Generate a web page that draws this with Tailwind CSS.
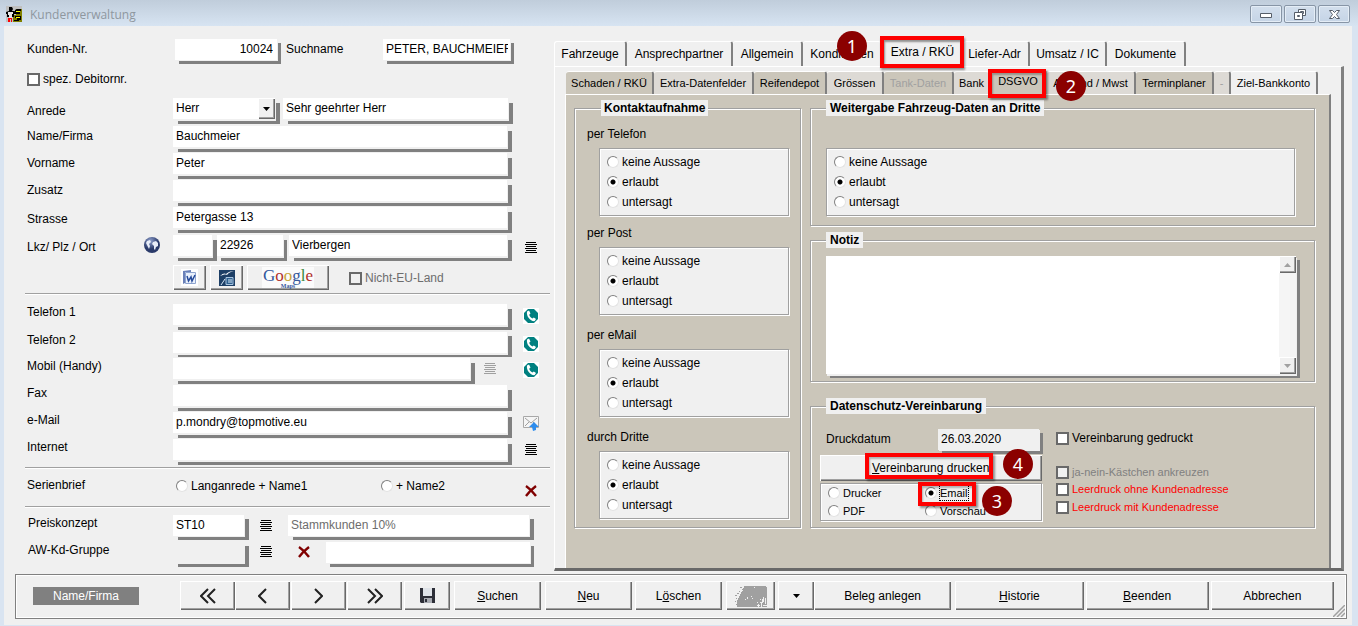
<!DOCTYPE html>
<html lang="de">
<head>
<meta charset="utf-8">
<title>Kundenverwaltung</title>
<script src="https://cdn.jsdelivr.net/npm/@tailwindcss/browser@4"></script>
</head>
<body class="min-h-screen bg-[#f0f0f0] text-black text-[12px] leading-4 font-['Liberation_Sans',Arial,sans-serif]">

<svg class="hidden" aria-hidden="true">
  <symbol id="lines" viewBox="0 0 12 12"><path d="M1 .5h10M0 2.5h12M1 4.5h10M0 6.5h12M1 8.5h10M0 10.5h12" stroke="currentColor" stroke-width="1" shape-rendering="crispEdges"/></symbol>
  <symbol id="cross" viewBox="0 0 12 12"><path d="M1 1c3 2 7 6 10 10M11 1C7 4 4 7 1 11" stroke="#800000" stroke-width="2.400" fill="none"/></symbol>
  <symbol id="phone" viewBox="0 0 16 16"><path fill="#fff" d="M0 0h16v16H0z"/><path fill="#008080" d="M5 1h6l4 4v6l-4 4H5l-4-4V5z"/><path fill="#fff" d="M4 3.500l2-1 1.500 3-1.300 1.200c.5 1.800 1.600 3 3.200 3.800l1.400-1.100 2.200 1.700-1.300 2c-4 .6-8.600-4.600-7.700-9.600z"/></symbol>
</svg>

<div class="min-h-screen flex flex-col border-l-4 border-r-[6px] border-b border-[#d9e4f1]">
  <header class="-ml-1 -mr-[6px] h-[26px] flex items-center pl-[6px] pr-2 gap-2 bg-linear-to-b from-[#c0cddb] to-[#d7e4f2]">
    <svg class="size-4 mt-[2px]" viewBox="0 0 16 16" aria-hidden="true"><path fill="#c0c0c0" d="M0 0h16v16H0z"/><path fill="#808000" d="M10 3h6v13H7V9h3z"/><path d="M3 1h3l1 2-1 2h2l3 1v2H8v3H1V8H0V6l3-1z"/><path d="M2 6h5v2H6v4H3V9H2z" fill="#e8e8e8"/><path d="M2 12h4v4H5v-3H4v3H2z" fill="#f00"/><path d="M9 4l2-1h4v2h-1v3h-3L9 7zM9 10h6v4h-2v1H8v-1h3v-2H9z"/><path d="M10 5h4v1h-4zM10 11h4v1h-4z" fill="#ff0"/></svg>
    <h1 class="flex-1 pt-1 text-[#8e979f] font-['Open_Sans','Noto_Sans',sans-serif]">Kundenverwaltung</h1>
    <div class="flex gap-[2px] pt-[2px]">
      <button aria-label="Minimieren" class="w-8 h-[18px] flex items-center justify-center rounded-[2px] border border-[#8795a6] bg-linear-to-b from-[#d3dfed] to-[#c5d4e6] shadow-[inset_0_0_0_1px_#e4edf6]"><svg class="w-3 h-[5px] mt-[2px]" viewBox="0 0 12 5"><path d="M.5.5h11v4H.5z" fill="#fff" stroke="#555d68"/></svg></button>
      <button aria-label="Wiederherstellen" class="w-8 h-[18px] flex items-center justify-center rounded-[2px] border border-[#8795a6] bg-linear-to-b from-[#d3dfed] to-[#c5d4e6] shadow-[inset_0_0_0_1px_#e4edf6]"><svg class="w-3 h-[11px]" viewBox="0 0 12 11" fill="#fff" stroke="#555d68"><path d="M4.500.5h7v6h-7z"/><path d="M6.500 2.500h3v2h-3z"/><path d="M.5 3.500h8v7h-8z"/><path d="M3.500 6.500h2v1h-2z"/></svg></button>
      <button aria-label="Schließen" class="w-8 h-[18px] flex items-center justify-center rounded-[2px] border border-[#8795a6] bg-linear-to-b from-[#d3dfed] to-[#c5d4e6] shadow-[inset_0_0_0_1px_#e4edf6]"><svg class="w-[11px] h-[9px]" viewBox="0 0 11 9"><path d="M.5.5h3l2 2 2-2h3L7.500 4.500l3 4h-3l-2-2-2 2h-3l3-4z" fill="#fff" stroke="#555d68"/></svg></button>
    </div>
  </header>

  <main class="flex">
    <form class="w-[550px] shrink-0 pt-[13px] pb-[2px] pl-[21px]">
      <div class="h-8 flex items-start pl-[2px]">
        <label for="nr" class="w-[148px] pt-[2px]">Kunden-Nr.</label>
        <input id="nr" value="10024" class="w-[102px] h-[21px] bg-white pr-1 pb-[1px] text-right shadow-[1px_1px_0_#f0f0f0,4px_4px_0_#808080]">
        <label for="such" class="w-[97px] ml-[9px] pt-[2px]">Suchname</label>
        <input id="such" value="PETER, BAUCHMEIER" class="w-[127px] h-[21px] bg-white pl-[3px] pr-[2px] pb-[1px] shadow-[1px_1px_0_#f0f0f0,4px_4px_0_#808080]">
      </div>
      <div class="h-[27px] flex items-start pl-[2px]">
        <label class="flex items-center gap-[3px]"><input type="checkbox" class="appearance-none size-[13px] border-2 border-[#696969] bg-white">spez. Debitornr.</label>
      </div>
      <div class="h-7 flex items-start pl-[2px]">
        <label for="anrede" class="w-[146px] pt-[5px]">Anrede</label>
        <div class="relative w-[102px] h-[21px] bg-white shadow-[1px_2px_0_#f0f0f0,5px_5px_0_#808080]">
          <select id="anrede" class="appearance-none w-full h-full pl-[3px] pb-[1px]"><option>Herr</option></select>
          <span class="absolute right-0 top-0 w-[17px] h-[21px] flex items-center justify-center bg-[#f0f0f0] shadow-[inset_1px_1px_0_#fff,inset_-1px_-1px_0_#696969,inset_-2px_-2px_0_#a0a0a0] pointer-events-none"><svg class="w-[7px] h-1" viewBox="0 0 7 4"><path d="M0 0h7L3.500 4z"/></svg></span>
        </div>
        <input aria-label="Briefanrede" value="Sehr geehrter Herr" class="w-[225px] h-[21px] ml-2 bg-white pl-[3px] pb-[1px] shadow-[1px_2px_0_#f0f0f0,5px_5px_0_#808080]">
      </div>
      <div class="h-[27px] flex items-start pl-[2px]">
        <label for="name" class="w-[146px] pt-[2px]">Name/Firma</label>
        <input id="name" value="Bauchmeier" class="w-[334px] h-[21px] bg-white pl-[3px] pb-[1px] shadow-[1px_2px_0_#f0f0f0,5px_5px_0_#808080]">
      </div>
      <div class="h-[27px] flex items-start pl-[2px]">
        <label for="vor" class="w-[146px] pt-[2px]">Vorname</label>
        <input id="vor" value="Peter" class="w-[334px] h-[21px] bg-white pl-[3px] pb-[1px] shadow-[1px_2px_0_#f0f0f0,5px_5px_0_#808080]">
      </div>
      <div class="h-[27px] flex items-start pl-[2px]">
        <label for="zus" class="w-[146px] pt-[2px]">Zusatz</label>
        <input id="zus" class="w-[334px] h-[21px] bg-white pl-[3px] pb-[1px] shadow-[1px_2px_0_#f0f0f0,5px_5px_0_#808080]">
      </div>
      <div class="h-7 flex items-start pl-[2px]">
        <label for="str" class="w-[146px] pt-1">Strasse</label>
        <input id="str" value="Petergasse 13" class="w-[334px] h-[21px] bg-white pl-[3px] pb-[1px] shadow-[1px_2px_0_#f0f0f0,5px_5px_0_#808080]">
      </div>
      <div class="h-[30px] flex items-start pl-[2px]">
        <label for="ort" class="w-[117px] pt-1">Lkz/ Plz / Ort</label>
        <svg class="size-4 mt-[2px] mr-[13px]" viewBox="0 0 16 16" aria-hidden="true"><defs><radialGradient id="g" cx=".4" cy=".25"><stop offset="0" stop-color="#8fa0cc"/><stop offset="1" stop-color="#2a3a6a"/></radialGradient></defs><circle cx="8" cy="8" r="8" fill="url(#g)"/><path d="M3 4l3-1 1 2-2 2 1 2-1 3-2-4-1-2zM9 5l3-1 2 2v3l-2 1-1 3-1-1V9L8 7z" fill="#e8edf8"/></svg>
        <input aria-label="Lkz" class="w-[39px] h-[21px] bg-white shadow-[1px_2px_0_#f0f0f0,5px_5px_0_#808080]">
        <input aria-label="Plz" value="22926" class="relative w-[66px] h-[21px] ml-[5px] bg-white pl-[3px] pb-[1px] shadow-[1px_2px_0_#f0f0f0,4px_5px_0_#808080]">
        <input id="ort" value="Vierbergen" class="w-[218px] h-[21px] ml-[6px] bg-white pl-[3px] pb-[1px] shadow-[1px_2px_0_#f0f0f0,5px_5px_0_#808080]">
        <button type="button" aria-label="Ort wählen" class="ml-[18px] mt-[7px]"><svg class="size-3"><use href="#lines"/></svg></button>
      </div>
      <div class="h-7 flex items-start pl-[148px]">
        <button type="button" aria-label="Word" class="w-[33px] h-[25px] flex items-center justify-center bg-[#f0f0f0] shadow-[inset_1px_1px_0_#fff,inset_-1px_-1px_0_#696969,inset_-2px_-2px_0_#a0a0a0]"><svg class="size-[17px]" viewBox="0 0 17 17"><path d="M0 0h17v17H0z" fill="#fff"/><path d="M2 2l8-1v2H4v11l-2 1z" fill="#6a80b8"/><path d="M4.500 3.500h10v11h-10z" fill="#e9f0fb" stroke="#8ea4cf"/><path d="M6 7l1.500 5L10 8l1 4 3-6" fill="none" stroke="#254a9a" stroke-width="1.500"/></svg></button>
        <button type="button" aria-label="Writer" class="w-[33px] h-[25px] ml-1 flex items-center justify-center bg-[#f0f0f0] shadow-[inset_1px_1px_0_#fff,inset_-1px_-1px_0_#696969,inset_-2px_-2px_0_#a0a0a0]"><svg class="size-4" viewBox="0 0 16 16"><path d="M0 0h16v16H0z" fill="#1d3f66"/><path d="M1 6c3-3 5-3 6-2 2-2 5-3 8-3-4 1-6 2-7 4-2-1-4 0-7 1z" fill="#fff"/><path d="M7 7.500h7v7H7z" fill="#2f618f" stroke="#a8c4e0"/><path d="M9 10h4M9 12h4M2 15l4-6" stroke="#d6e6f5" fill="none"/></svg></button>
        <button type="button" aria-label="Google Maps" class="w-[82px] h-[25px] ml-1 flex items-center justify-center bg-[#f0f0f0] shadow-[inset_1px_1px_0_#fff,inset_-1px_-1px_0_#696969,inset_-2px_-2px_0_#a0a0a0]">
          <span class="h-[21px] w-[52px] bg-[#fbfbfb] flex flex-col items-center font-['Liberation_Serif',serif]"><span class="text-[17px] leading-[17px]"><span class="text-[#35589c]">G</span><span class="text-[#b0302c]">o</span><span class="text-[#c8a63a]">o</span><span class="text-[#35589c]">g</span><span class="text-[#3c8a40]">l</span><span class="text-[#b0302c]">e</span></span><span class="text-[6px] leading-[4px] font-bold text-[#35589c]">Maps</span></span>
        </button>
        <label class="flex items-center gap-[3px] ml-5 pt-[5px] text-[#6d6d6d]"><input type="checkbox" disabled class="appearance-none size-[13px] border-2 border-[#696969]">Nicht-EU-Land</label>
      </div>
      <hr class="mr-1 border-t border-b border-t-[#a0a0a0] border-b-white">
      <div class="h-7 mt-[9px] flex items-start pl-[2px]">
        <label for="t1" class="w-[146px]">Telefon 1</label>
        <input id="t1" class="w-[334px] h-[21px] bg-white pl-[3px] pb-[1px] shadow-[1px_2px_0_#f0f0f0,5px_5px_0_#808080]">
        <button type="button" aria-label="Telefon 1 anrufen" class="ml-4 mt-1"><svg class="size-4"><use href="#phone"/></svg></button>
      </div>
      <div class="h-[26px] flex items-start pl-[2px]">
        <label for="t2" class="w-[146px]">Telefon 2</label>
        <input id="t2" class="w-[334px] h-[21px] bg-white pl-[3px] pb-[1px] shadow-[1px_2px_0_#f0f0f0,5px_4px_0_#808080]">
        <button type="button" aria-label="Telefon 2 anrufen" class="ml-4 mt-1"><svg class="size-4"><use href="#phone"/></svg></button>
      </div>
      <div class="h-[27px] flex items-start pl-[2px]">
        <label for="mob" class="w-[146px]">Mobil (Handy)</label>
        <input id="mob" class="w-[297px] h-[21px] bg-white pl-[3px] pb-[1px] shadow-[1px_2px_0_#f0f0f0,5px_5px_0_#808080]">
        <button type="button" aria-label="Mobil wählen" class="ml-[14px] mt-[5px] text-[#a0a0a0]"><svg class="size-3"><use href="#lines"/></svg></button>
        <button type="button" aria-label="Mobil anrufen" class="ml-[27px] mt-1"><svg class="size-4"><use href="#phone"/></svg></button>
      </div>
      <div class="h-[27px] flex items-start pl-[2px]">
        <label for="fax" class="w-[146px]">Fax</label>
        <input id="fax" class="w-[334px] h-[21px] bg-white pl-[3px] pb-[1px] shadow-[1px_2px_0_#f0f0f0,5px_5px_0_#808080]">
      </div>
      <div class="h-[27px] flex items-start pl-[2px]">
        <label for="mail" class="w-[146px]">e-Mail</label>
        <input id="mail" value="p.mondry@topmotive.eu" class="w-[334px] h-[21px] bg-white pl-[3px] pb-[1px] shadow-[1px_2px_0_#f0f0f0,5px_5px_0_#808080]">
        <button type="button" aria-label="e-Mail senden" class="ml-4 mt-1"><svg class="size-4" viewBox="0 0 16 16"><path d="M.5.5h15v11H.5z" fill="#f5f5f5" stroke="#a8a8a8"/><path d="M2 2l6 5 6-5M2 10l4-4M14 10l-4-4" fill="none" stroke="#a0a0a0"/><path d="M11 6l5 5h-3v3l-3 1-1-4H6z" fill="#2e8ded"/></svg></button>
      </div>
      <div class="h-7 flex items-start pl-[2px]">
        <label for="web" class="w-[146px]">Internet</label>
        <input id="web" class="w-[334px] h-[21px] bg-white pl-[3px] pb-[1px] shadow-[1px_2px_0_#f0f0f0,5px_5px_0_#808080]">
        <button type="button" aria-label="Internet öffnen" class="ml-[18px] mt-[5px]"><svg class="size-3"><use href="#lines"/></svg></button>
      </div>
      <hr class="mr-1 border-t border-b border-t-[#a0a0a0] border-b-white">
      <div class="h-[37px] pt-2 flex items-start pl-[2px]">
        <span class="w-[149px]">Serienbrief</span>
        <label class="w-[205px] flex items-center gap-[3px] pt-[1px]"><input type="radio" name="serie" class="appearance-none size-3 rounded-full bg-white border border-[#808080] border-r-[#e3e3e3] border-b-[#e3e3e3]">Langanrede + Name1</label>
        <label class="w-[144px] flex items-center gap-[3px] pt-[1px]"><input type="radio" name="serie" class="appearance-none size-3 rounded-full bg-white border border-[#808080] border-r-[#e3e3e3] border-b-[#e3e3e3]">+ Name2</label>
        <button type="button" aria-label="Serienbrief löschen" class="mt-2"><svg class="size-3"><use href="#cross"/></svg></button>
      </div>
      <hr class="mr-1 border-t border-b border-t-[#a0a0a0] border-b-white">
      <div class="h-[27px] mt-[7px] flex items-start pl-[3px]">
        <label for="preis" class="w-[145px]">Preiskonzept</label>
        <input id="preis" value="ST10" class="w-[71px] h-[21px] bg-white pl-[3px] pb-[2px] shadow-[1px_1px_0_#f0f0f0,5px_4px_0_#808080]">
        <button type="button" aria-label="Preiskonzept wählen" class="ml-4 mt-[5px]"><svg class="size-3"><use href="#lines"/></svg></button>
        <input aria-label="Preiskonzept Name" value="Stammkunden 10%" class="w-[241px] h-[21px] ml-4 bg-white pl-[3px] pb-[2px] text-[#6d6d6d] shadow-[1px_1px_0_#f0f0f0,5px_4px_0_#808080]">
      </div>
      <div class="h-[27px] flex items-start pl-[3px]">
        <label for="aw" class="w-[145px]">AW-Kd-Gruppe</label>
        <input id="aw" class="w-[71px] h-[21px] bg-[#f0f0f0] pl-[3px] shadow-[1px_1px_0_#f0f0f0,5px_4px_0_#808080]">
        <button type="button" aria-label="Gruppe wählen" class="ml-4 mt-1"><svg class="size-3"><use href="#lines"/></svg></button>
        <button type="button" aria-label="Gruppe löschen" class="ml-[26px] mt-1"><svg class="size-3"><use href="#cross"/></svg></button>
        <input aria-label="Gruppe Name" class="w-[204px] h-[21px] ml-4 bg-white pl-[3px] shadow-[1px_1px_0_#f0f0f0,4px_4px_0_#808080]">
      </div>
    </form>

    <section class="flex-1 flex flex-col pt-[15px] pr-2">
      <div class="h-[25px] flex" role="tablist">
        <button role="tab" class="w-[73px] rounded-t-[3px] border-t border-t-white border-l border-l-white border-r-2 border-r-[#808080]">Fahrzeuge</button>
        <button role="tab" class="w-[106px] rounded-t-[3px] border-t border-t-white border-r-2 border-r-[#808080]">Ansprechpartner</button>
        <button role="tab" class="w-[70px] rounded-t-[3px] border-t border-t-white border-r-2 border-r-[#808080]">Allgemein</button>
        <button role="tab" class="w-[78px] rounded-t-[3px] border-t border-t-white">Konditionen</button>
        <div class="relative w-[83px]">
          <button role="tab" aria-selected="true" class="w-full h-full pb-[3px]">Extra / RKÜ</button>
          <span class="absolute z-10 -left-px -top-[5px] w-[84px] h-8 border-4 border-[#fe0000] shadow-[1px_2px_2px_#00000066,inset_1px_2px_2px_#00000066] pointer-events-none"></span>
          <span class="absolute z-10 -left-11 -top-[10px] size-[30px] rounded-full bg-[#8b0000] text-white text-[18px] font-['Noto_Sans',sans-serif] flex items-center justify-center">1</span>
        </div>
        <button role="tab" class="w-[66px] rounded-t-[3px] pr-[3px] border-t border-t-white border-r-2 border-r-[#808080]">Liefer-Adr</button>
        <button role="tab" class="w-[77px] rounded-t-[3px] border-t border-t-white border-r-2 border-r-[#808080]">Umsatz / IC</button>
        <button role="tab" class="w-[79px] rounded-t-[3px] border-t border-t-white border-r-2 border-r-[#808080]">Dokumente</button>
      </div>
      <div class="flex-1 flex flex-col pt-1 pl-[10px] pr-[10px] border-l border-t border-l-white border-t-white border-r-[3px] border-r-[#808080] border-b-[3px] border-b-[#696969]">
        <div class="h-[23px] flex pl-[1px] text-[11px]" role="tablist">
          <button role="tab" class="w-[88px] rounded-t-[3px] bg-[#cbc6ba] border-t border-t-white border-r-2 border-r-[#808080]">Schaden / RKÜ</button>
          <button role="tab" class="w-[100px] rounded-t-[3px] bg-[#dddad5] border-t border-t-white border-r-2 border-r-[#808080]">Extra-Datenfelder</button>
          <button role="tab" class="w-[73px] rounded-t-[3px] bg-[#cbc6ba] border-t border-t-white border-r-2 border-r-[#808080]">Reifendepot</button>
          <button role="tab" class="w-[57px] rounded-t-[3px] bg-[#dddad5] border-t border-t-white border-r-2 border-r-[#808080]">Grössen</button>
          <button role="tab" disabled class="w-[70px] rounded-t-[3px] bg-[#cbc6ba] text-[#a0a0a0] border-t border-t-white border-r-2 border-r-[#808080]">Tank-Daten</button>
          <button role="tab" class="w-[35px] rounded-t-[3px] bg-[#dddad5] border-t border-t-white">Bank</button>
          <div class="relative w-[58px] bg-[#cbc6ba]">
            <button role="tab" aria-selected="true" class="w-full h-full pb-[4px]">DSGVO</button>
            <span class="absolute z-10 -left-px -top-[2px] w-[58px] h-[29px] border-4 border-[#fe0000] shadow-[2px_2px_2px_#00000066,inset_1px_2px_2px_#00000044] pointer-events-none"></span>
            <span class="absolute z-10 left-[67px] top-0 size-[30px] rounded-full bg-[#8b0000] text-white text-[18px] font-['Noto_Sans',sans-serif] flex items-center justify-center">2</span>
          </div>
          <button role="tab" class="w-[89px] rounded-t-[3px] bg-[#dddad5] border-t border-t-white border-r-2 border-r-[#808080]">Ausland / Mwst</button>
          <button role="tab" class="w-[78px] rounded-t-[3px] bg-[#cbc6ba] border-t border-t-white border-r-2 border-r-[#808080]">Terminplaner</button>
          <button role="tab" disabled class="w-[17px] rounded-t-[3px] bg-[#dddad5] text-[#a0a0a0] border-t border-t-white border-r-2 border-r-[#808080]">-</button>
          <button role="tab" class="w-[87px] rounded-t-[3px] border-t border-t-white border-r-2 border-r-[#808080]">Ziel-Bankkonto</button>
        </div>
        <div class="flex-1 flex items-start gap-[9px] pt-[5px] pl-2 pr-[14px] bg-[#cbc6ba] border-l border-t border-l-white border-t-white border-r-2 border-r-[#808080]">
          <fieldset class="w-[227px] pl-3 pr-[11px] pb-2 border border-[#a0a0a0] shadow-[1px_1px_0_#fff,inset_1px_1px_0_#fff]">
            <legend class="ml-[14px] px-[3px] bg-[#f0f0f0] font-bold">Kontaktaufnahme</legend>
            <div class="mt-[10px] mb-[6px]">per Telefon</div>
            <div class="ml-3 h-[68px] pt-[5px] pl-[7px] flex flex-col gap-1 bg-[#f0f0f0] border border-[#a0a0a0] shadow-[1px_1px_0_#fff,inset_1px_1px_0_#fff]">
              <label class="flex items-center gap-[3px]"><input type="radio" name="a" class="appearance-none size-3 rounded-full bg-white border border-[#808080] border-r-[#e3e3e3] border-b-[#e3e3e3]">keine Aussage</label>
              <label class="flex items-center gap-[3px]"><input type="radio" name="a" checked class="appearance-none size-3 rounded-full bg-white border border-[#808080] border-r-[#e3e3e3] border-b-[#e3e3e3] checked:bg-[radial-gradient(circle,#000_2px,transparent_3px)]">erlaubt</label>
              <label class="flex items-center gap-[3px]"><input type="radio" name="a" class="appearance-none size-3 rounded-full bg-white border border-[#808080] border-r-[#e3e3e3] border-b-[#e3e3e3]">untersagt</label>
            </div>
            <div class="mt-[9px] mb-[6px]">per Post</div>
            <div class="ml-3 h-[68px] pt-[5px] pl-[7px] flex flex-col gap-1 bg-[#f0f0f0] border border-[#a0a0a0] shadow-[1px_1px_0_#fff,inset_1px_1px_0_#fff]">
              <label class="flex items-center gap-[3px]"><input type="radio" name="b" class="appearance-none size-3 rounded-full bg-white border border-[#808080] border-r-[#e3e3e3] border-b-[#e3e3e3]">keine Aussage</label>
              <label class="flex items-center gap-[3px]"><input type="radio" name="b" checked class="appearance-none size-3 rounded-full bg-white border border-[#808080] border-r-[#e3e3e3] border-b-[#e3e3e3] checked:bg-[radial-gradient(circle,#000_2px,transparent_3px)]">erlaubt</label>
              <label class="flex items-center gap-[3px]"><input type="radio" name="b" class="appearance-none size-3 rounded-full bg-white border border-[#808080] border-r-[#e3e3e3] border-b-[#e3e3e3]">untersagt</label>
            </div>
            <div class="mt-3 mb-[6px]">per eMail</div>
            <div class="ml-3 h-[68px] pt-[5px] pl-[7px] flex flex-col gap-1 bg-[#f0f0f0] border border-[#a0a0a0] shadow-[1px_1px_0_#fff,inset_1px_1px_0_#fff]">
              <label class="flex items-center gap-[3px]"><input type="radio" name="c" class="appearance-none size-3 rounded-full bg-white border border-[#808080] border-r-[#e3e3e3] border-b-[#e3e3e3]">keine Aussage</label>
              <label class="flex items-center gap-[3px]"><input type="radio" name="c" checked class="appearance-none size-3 rounded-full bg-white border border-[#808080] border-r-[#e3e3e3] border-b-[#e3e3e3] checked:bg-[radial-gradient(circle,#000_2px,transparent_3px)]">erlaubt</label>
              <label class="flex items-center gap-[3px]"><input type="radio" name="c" class="appearance-none size-3 rounded-full bg-white border border-[#808080] border-r-[#e3e3e3] border-b-[#e3e3e3]">untersagt</label>
            </div>
            <div class="mt-3 mb-[6px]">durch Dritte</div>
            <div class="ml-3 h-[68px] pt-[5px] pl-[7px] flex flex-col gap-1 bg-[#f0f0f0] border border-[#a0a0a0] shadow-[1px_1px_0_#fff,inset_1px_1px_0_#fff]">
              <label class="flex items-center gap-[3px]"><input type="radio" name="d" class="appearance-none size-3 rounded-full bg-white border border-[#808080] border-r-[#e3e3e3] border-b-[#e3e3e3]">keine Aussage</label>
              <label class="flex items-center gap-[3px]"><input type="radio" name="d" checked class="appearance-none size-3 rounded-full bg-white border border-[#808080] border-r-[#e3e3e3] border-b-[#e3e3e3] checked:bg-[radial-gradient(circle,#000_2px,transparent_3px)]">erlaubt</label>
              <label class="flex items-center gap-[3px]"><input type="radio" name="d" class="appearance-none size-3 rounded-full bg-white border border-[#808080] border-r-[#e3e3e3] border-b-[#e3e3e3]">untersagt</label>
            </div>
          </fieldset>

          <div class="flex-1">
            <fieldset class="pl-[15px] pr-[19px] pb-[9px] border border-[#a0a0a0] shadow-[1px_1px_0_#fff,inset_1px_1px_0_#fff]">
              <legend class="px-1 bg-[#f0f0f0] font-bold">Weitergabe Fahrzeug-Daten an Dritte</legend>
              <div class="mt-8 h-[68px] pt-[5px] pl-[7px] flex flex-col gap-1 bg-[#f0f0f0] border border-[#a0a0a0] shadow-[1px_1px_0_#fff,inset_1px_1px_0_#fff]">
                <label class="flex items-center gap-[3px]"><input type="radio" name="e" class="appearance-none size-3 rounded-full bg-white border border-[#808080] border-r-[#e3e3e3] border-b-[#e3e3e3]">keine Aussage</label>
                <label class="flex items-center gap-[3px]"><input type="radio" name="e" checked class="appearance-none size-3 rounded-full bg-white border border-[#808080] border-r-[#e3e3e3] border-b-[#e3e3e3] checked:bg-[radial-gradient(circle,#000_2px,transparent_3px)]">erlaubt</label>
                <label class="flex items-center gap-[3px]"><input type="radio" name="e" class="appearance-none size-3 rounded-full bg-white border border-[#808080] border-r-[#e3e3e3] border-b-[#e3e3e3]">untersagt</label>
              </div>
            </fieldset>
            <fieldset class="mt-[6px] pl-[15px] pr-[18px] pb-[7px] border border-[#a0a0a0] shadow-[1px_1px_0_#fff,inset_1px_1px_0_#fff]">
              <legend class="px-1 bg-[#f0f0f0] font-bold">Notiz</legend>
              <div class="mt-2 h-[118px] flex bg-white shadow-[1px_2px_0_#f0f0f0,4px_4px_0_#808080]">
                <textarea aria-label="Notiz" class="flex-1 resize-none outline-none p-1"></textarea>
                <div class="w-[17px] flex flex-col justify-between bg-[#f5f5f5]">
                  <button type="button" aria-label="Nach oben" class="h-[17px] flex items-center justify-center bg-[#f0f0f0] shadow-[inset_1px_1px_0_#fff,inset_-1px_-1px_0_#696969,inset_-2px_-2px_0_#a0a0a0]"><svg class="w-[7px] h-1" viewBox="0 0 7 4"><path d="M0 4h7L3.500 0z" fill="#a0a0a0"/></svg></button>
                  <button type="button" aria-label="Nach unten" class="h-[17px] flex items-center justify-center bg-[#f0f0f0] shadow-[inset_1px_1px_0_#fff,inset_-1px_-1px_0_#696969,inset_-2px_-2px_0_#a0a0a0]"><svg class="w-[7px] h-1" viewBox="0 0 7 4"><path d="M0 0h7L3.500 4z" fill="#a0a0a0"/></svg></button>
                </div>
              </div>
            </fieldset>
            <fieldset class="mt-4 pl-[9px] pb-[6px] border border-[#a0a0a0] shadow-[1px_1px_0_#fff,inset_1px_1px_0_#fff]">
              <legend class="ml-[6px] px-1 bg-[#f0f0f0] font-bold">Datenschutz-Vereinbarung</legend>
              <div class="mt-[15px] flex items-start">
                <div class="w-[222px]">
                  <div class="flex pl-[6px]">
                    <label for="dd" class="w-[112px] pt-[2px]">Druckdatum</label>
                    <input id="dd" value="26.03.2020" class="w-[101px] h-[21px] bg-[#f0f0f0] pl-[3px] pb-[2px] shadow-[1px_1px_0_#f0f0f0,4px_4px_0_#808080]">
                  </div>
                  <div class="relative mt-[5px]">
                    <button type="button" class="w-full h-[26px] pl-[52px] text-left whitespace-nowrap bg-[#f0f0f0] shadow-[inset_1px_1px_0_#fff,inset_-1px_-1px_0_#696969,inset_-2px_-2px_0_#a0a0a0]"><u>V</u>ereinbarung drucken</button>
                    <span class="absolute z-10 left-[45px] -top-[2px] w-[128px] h-[26px] border-4 border-[#fe0000] shadow-[2px_2px_2px_#00000066,inset_1px_2px_2px_#00000044] pointer-events-none"></span>
                    <span class="absolute z-10 left-[183px] -top-[6px] size-[30px] rounded-full bg-[#8b0000] text-white text-[18px] font-['Noto_Sans',sans-serif] flex items-center justify-center">4</span>
                  </div>
                  <div class="relative mt-[2px] h-[38px] pl-[7px] grid grid-cols-[97px_1fr] text-[11px] bg-[#f0f0f0] border border-[#a0a0a0] shadow-[1px_1px_0_#fff,inset_1px_1px_0_#fff]">
                    <label class="flex items-center gap-[3px]"><input type="radio" name="f" class="appearance-none size-3 rounded-full bg-white border border-[#808080] border-r-[#e3e3e3] border-b-[#e3e3e3]">Drucker</label>
                    <label class="flex items-center gap-[2px]"><input type="radio" name="f" checked class="appearance-none size-3 rounded-full bg-white border border-[#808080] border-r-[#e3e3e3] border-b-[#e3e3e3] checked:bg-[radial-gradient(circle,#000_2px,transparent_3px)]"><span class="border border-dotted border-black leading-[14px]">Email</span></label>
                    <label class="flex items-center gap-[3px]"><input type="radio" name="f" class="appearance-none size-3 rounded-full bg-white border border-[#808080] border-r-[#e3e3e3] border-b-[#e3e3e3]">PDF</label>
                    <label class="flex items-center gap-[3px]"><input type="radio" name="f" class="appearance-none size-3 rounded-full bg-white border border-[#808080] border-r-[#e3e3e3] border-b-[#e3e3e3]">Vorschau</label>
                    <span class="absolute z-10 left-[97px] -top-[2px] w-[58px] h-6 border-4 border-[#fe0000] shadow-[2px_2px_2px_#00000066,inset_1px_2px_2px_#00000044] pointer-events-none"></span>
                    <span class="absolute z-10 left-[161px] top-[2px] size-[30px] rounded-full bg-[#8b0000] text-white text-[18px] font-['Noto_Sans',sans-serif] flex items-center justify-center">3</span>
                  </div>
                </div>
                <div class="flex flex-col items-start ml-[14px] pt-[1px] text-[11px]">
                  <label class="flex items-center gap-[3px] text-[12px]"><input type="checkbox" class="appearance-none size-[13px] border-2 border-[#696969] bg-white">Vereinbarung gedruckt</label>
                  <label class="flex items-center gap-[3px] mt-[18px] text-[#808080]"><input type="checkbox" disabled class="appearance-none size-[13px] border-2 border-[#696969] bg-[#f0f0f0]">ja-nein-Kästchen ankreuzen</label>
                  <label class="flex items-center gap-[3px] mt-[1px] text-[#ff0000]"><input type="checkbox" class="appearance-none size-[13px] border-2 border-[#696969] bg-white">Leerdruck ohne Kundenadresse</label>
                  <label class="flex items-center gap-[3px] mt-[2px] text-[#ff0000]"><input type="checkbox" class="appearance-none size-[13px] border-2 border-[#696969] bg-white">Leerdruck mit Kundenadresse</label>
                </div>
              </div>
            </fieldset>
          </div>
        </div>
      </div>
    </section>
  </main>

  <footer class="relative mt-[3px] mb-[6px] ml-[11px] mr-[5px] h-[45px] flex items-center pl-[17px] pr-3 pb-[2px] border border-[#808080] shadow-[inset_1px_1px_0_#fff,inset_-1px_-1px_0_#fff]">
    <span class="w-[106px] h-[18px] mr-[41px] bg-[#808080] text-white text-center leading-[19px]">Name/Firma</span>
    <button aria-label="Erster" class="w-[55px] h-[29px] flex items-center justify-center shadow-[inset_1px_1px_0_#fff,inset_-1px_-1px_0_#696969,inset_-2px_-2px_0_#a0a0a0]"><svg class="w-4 h-4" viewBox="0 0 16 16" fill="none" stroke="#222" stroke-width="2"><path d="M8 1L1 8l7 7M15 1L8 8l7 7"/></svg></button>
    <button aria-label="Zurück" class="w-[55px] h-[29px] flex items-center justify-center shadow-[inset_1px_1px_0_#fff,inset_-1px_-1px_0_#696969,inset_-2px_-2px_0_#a0a0a0]"><svg class="w-[9px] h-4" viewBox="0 0 9 16" fill="none" stroke="#222" stroke-width="2"><path d="M8 1L1 8l7 7"/></svg></button>
    <button aria-label="Weiter" class="w-[55px] h-[29px] ml-[1px] flex items-center justify-center shadow-[inset_1px_1px_0_#fff,inset_-1px_-1px_0_#696969,inset_-2px_-2px_0_#a0a0a0]"><svg class="w-[9px] h-4" viewBox="0 0 9 16" fill="none" stroke="#222" stroke-width="2"><path d="M1 1l7 7-7 7"/></svg></button>
    <button aria-label="Letzter" class="w-[55px] h-[29px] ml-[1px] flex items-center justify-center shadow-[inset_1px_1px_0_#fff,inset_-1px_-1px_0_#696969,inset_-2px_-2px_0_#a0a0a0]"><svg class="w-4 h-4" viewBox="0 0 16 16" fill="none" stroke="#222" stroke-width="2"><path d="M1 1l7 7-7 7M8 1l7 7-7 7"/></svg></button>
    <button aria-label="Speichern" class="w-[46px] h-[29px] ml-[2px] flex items-center justify-center shadow-[inset_1px_1px_0_#fff,inset_-1px_-1px_0_#696969,inset_-2px_-2px_0_#a0a0a0]"><svg class="size-[15px]" viewBox="0 0 15 15"><path d="M0 0h15v15H1l-1-1z" fill="#2d2f38"/><path d="M3 0h9v8H3z" fill="#dfe3e8"/><path d="M4 10h8v5H4z" fill="#a8abb2"/><path d="M5 11h2v3H5z" fill="#2d2f38"/></svg></button>
    <button class="w-[87px] h-[29px] ml-1 shadow-[inset_1px_1px_0_#fff,inset_-1px_-1px_0_#696969,inset_-2px_-2px_0_#a0a0a0]"><u>S</u>uchen</button>
    <button class="w-[87px] h-[29px] ml-1 shadow-[inset_1px_1px_0_#fff,inset_-1px_-1px_0_#696969,inset_-2px_-2px_0_#a0a0a0]"><u>N</u>eu</button>
    <button class="w-[87px] h-[29px] ml-[3px] shadow-[inset_1px_1px_0_#fff,inset_-1px_-1px_0_#696969,inset_-2px_-2px_0_#a0a0a0]">L<u>ö</u>schen</button>
    <button aria-label="Fahrzeug" disabled class="w-[49px] h-[29px] ml-1 flex items-center justify-center shadow-[inset_1px_1px_0_#fff,inset_-1px_-1px_0_#696969,inset_-2px_-2px_0_#a0a0a0]"><svg class="w-8 h-[22px]" viewBox="0 0 32 22" shape-rendering="crispEdges"><path d="M9 1h21l2 2v19H2v-6l3-6 3-5z" fill="#a0a0a0"/><path d="M12 12h1M16 11h1M10 14h1M12 13h1M17 13h1M22 20h3M25 17h2v-3M28 12v5M25 14h1M28 20h4M22 17h1M19 2h1M23 19v3M30 13v6M26 18v4" stroke="#f0f0f0" fill="none"/><path d="M5 2h2M7 4h1M4 6h1M2 8h2M0 10h2M1 13h1M0 16h1M1 19h1" stroke="#a0a0a0"/></svg></button>
    <button aria-label="Fahrzeugmenü" class="w-9 h-[29px] ml-[3px] flex items-center justify-center shadow-[inset_1px_1px_0_#fff,inset_-1px_-1px_0_#696969,inset_-2px_-2px_0_#a0a0a0]"><svg class="w-[7px] h-1" viewBox="0 0 7 4"><path d="M0 0h7L3.500 4z"/></svg></button>
    <button class="flex-[137] h-[29px] shadow-[inset_1px_1px_0_#fff,inset_-1px_-1px_0_#696969,inset_-2px_-2px_0_#a0a0a0]">Beleg anlegen</button>
    <button class="flex-[128] h-[29px] ml-1 shadow-[inset_1px_1px_0_#fff,inset_-1px_-1px_0_#696969,inset_-2px_-2px_0_#a0a0a0]"><u>H</u>istorie</button>
    <button class="flex-[123] h-[29px] ml-[2px] shadow-[inset_1px_1px_0_#fff,inset_-1px_-1px_0_#696969,inset_-2px_-2px_0_#a0a0a0]"><u>B</u>eenden</button>
    <button class="flex-[123] h-[29px] ml-[2px] shadow-[inset_1px_1px_0_#fff,inset_-1px_-1px_0_#696969,inset_-2px_-2px_0_#a0a0a0]">Abbrechen</button>
    <svg class="absolute right-[1px] bottom-[1px] size-3" viewBox="0 0 12 12" aria-hidden="true"><path d="M0 12L12 0M4 12l8-8M8 12l4-4" stroke="#a0a0a0" stroke-width="1.500"/></svg>
  </footer>
</div>
</body>
</html>
